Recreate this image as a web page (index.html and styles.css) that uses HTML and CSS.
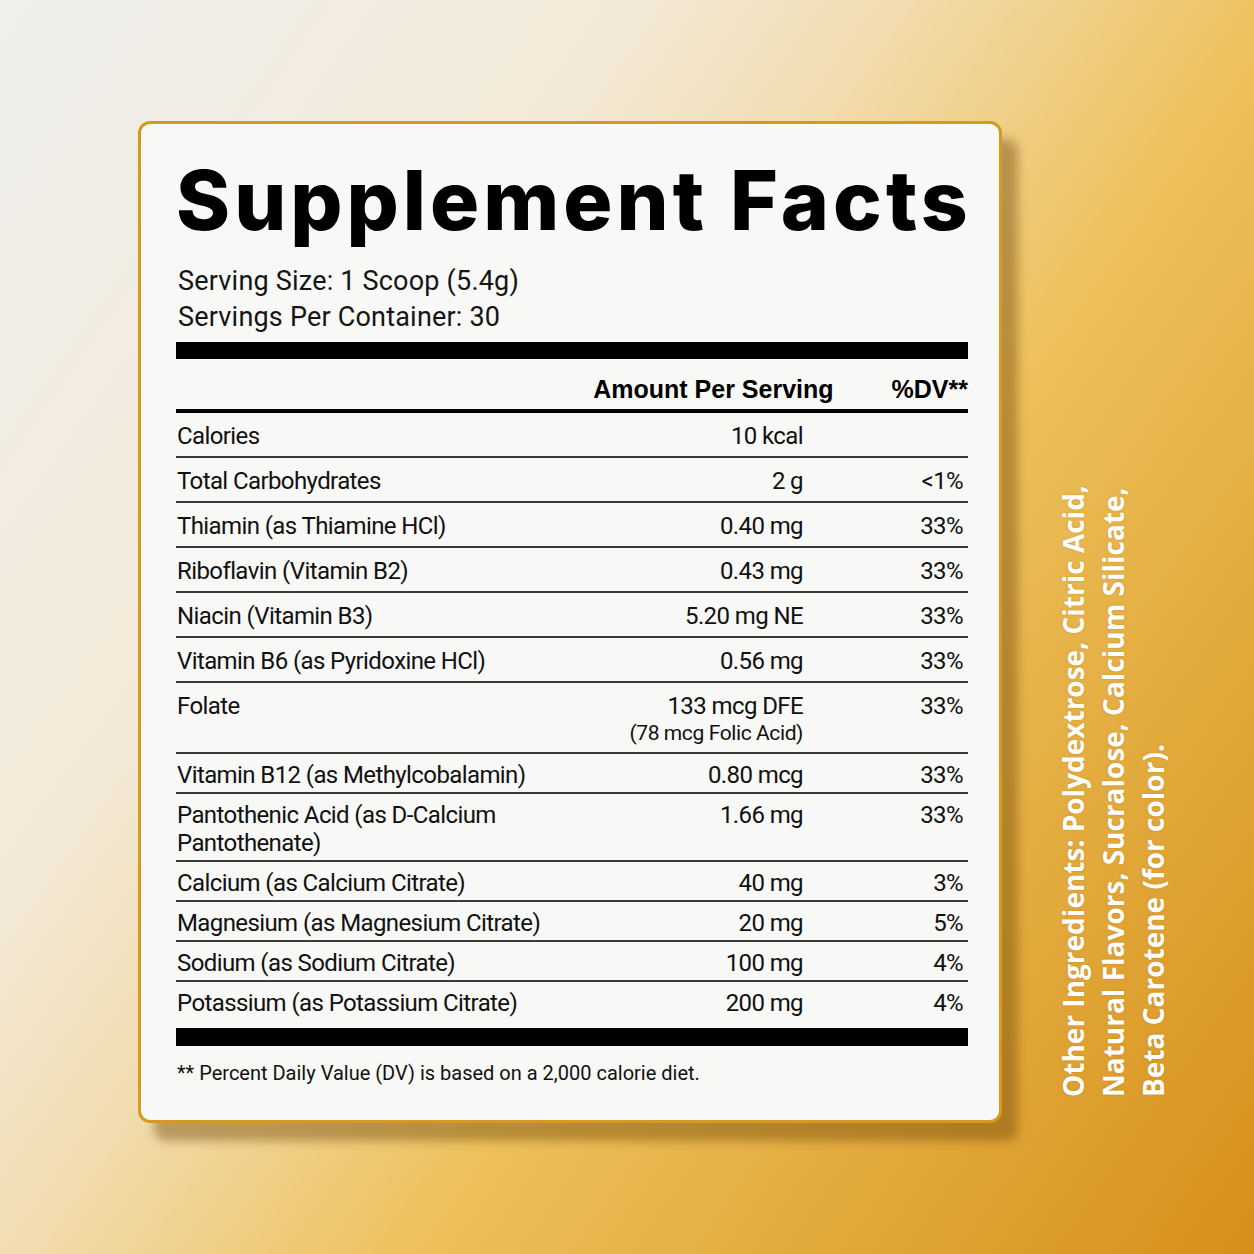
FILE: index.html
```html
<!DOCTYPE html>
<html lang="en">
<head>
<meta charset="utf-8">
<title>Supplement Facts</title>
<link rel="stylesheet" href="styles.css">
</head>
<body>
<main class="stage">
  <section class="card">
    <h1 class="title">Supplement Facts</h1>
    <div class="serving">
      <div>Serving Size: 1 Scoop (5.4g)</div>
      <div>Servings Per Container: 30</div>
    </div>
    <div class="bar"></div>
    <div class="head">
      <span>Amount Per Serving</span>
      <span>%DV**</span>
    </div>
    <div class="row">
      <span class="name">Calories</span><span class="amt">10 kcal</span><span class="dv"></span>
    </div>
    <div class="row">
      <span class="name">Total Carbohydrates</span><span class="amt">2 g</span><span class="dv">&lt;1%</span>
    </div>
    <div class="row">
      <span class="name">Thiamin (as Thiamine HCl)</span><span class="amt">0.40 mg</span><span class="dv">33%</span>
    </div>
    <div class="row">
      <span class="name">Riboflavin (Vitamin B2)</span><span class="amt">0.43 mg</span><span class="dv">33%</span>
    </div>
    <div class="row">
      <span class="name">Niacin (Vitamin B3)</span><span class="amt">5.20 mg NE</span><span class="dv">33%</span>
    </div>
    <div class="row">
      <span class="name">Vitamin B6 (as Pyridoxine HCl)</span><span class="amt">0.56 mg</span><span class="dv">33%</span>
    </div>
    <div class="row tall">
      <span class="name">Folate</span><span class="amt">133 mcg DFE<span class="sub">(78 mcg Folic Acid)</span></span><span class="dv">33%</span>
    </div>
    <div class="row compact">
      <span class="name">Vitamin B12 (as Methylcobalamin)</span><span class="amt">0.80 mcg</span><span class="dv">33%</span>
    </div>
    <div class="row compact">
      <span class="name">Pantothenic Acid (as D-Calcium Pantothenate)</span><span class="amt">1.66 mg</span><span class="dv">33%</span>
    </div>
    <div class="row compact">
      <span class="name">Calcium (as Calcium Citrate)</span><span class="amt">40 mg</span><span class="dv">3%</span>
    </div>
    <div class="row compact">
      <span class="name">Magnesium (as Magnesium Citrate)</span><span class="amt">20 mg</span><span class="dv">5%</span>
    </div>
    <div class="row compact">
      <span class="name">Sodium (as Sodium Citrate)</span><span class="amt">100 mg</span><span class="dv">4%</span>
    </div>
    <div class="row compact last">
      <span class="name">Potassium (as Potassium Citrate)</span><span class="amt">200 mg</span><span class="dv">4%</span>
    </div>
    <div class="bar bottom"></div>
    <p class="note">** Percent Daily Value (DV) is based on a 2,000 calorie diet.</p>
  </section>
  <aside class="side">
    Other Ingredients: Polydextrose, Citric Acid,<br>
    Natural Flavors, Sucralose, Calcium Silicate,<br>
    Beta Carotene (for color).
  </aside>
</main>
</body>
</html>
```
FILE: styles.css
```css
html, body {
  margin: 0;
  padding: 0;
}
body {
  width: 1254px;
  height: 1254px;
  overflow: hidden;
  background: linear-gradient(125deg, #efefed 0%, #f3e9d7 30%, #f2dcb0 42%, #edc15c 60%, #d68f18 100%);
  font-family: Roboto, "Liberation Sans", Arial, sans-serif;
  color: #111;
}
.stage {
  display: flex;
  align-items: stretch;
  padding: 121px 0 0 138px;
}
.card {
  box-sizing: border-box;
  width: 864px;
  height: 1002px;
  flex: none;
  background: #f8f8f6;
  border: 3px solid #d69a22;
  border-radius: 12px;
  box-shadow: 16px 18px 10px rgba(110, 70, 10, 0.42);
  padding: 36px 31px 0 35px;
}
.title {
  margin: 0;
  font-family: Inter, "Liberation Sans", Arial, sans-serif;
  font-weight: 800;
  font-size: 82px;
  line-height: 82px;
  letter-spacing: 4px;
  color: #000;
  white-space: nowrap;
}
.serving {
  margin-top: 21px;
  font-size: 27px;
  line-height: 36px;
  letter-spacing: 0.2px;
  padding-left: 2px;
  color: #151515;
}
.bar {
  height: 17px;
  background: #000;
  margin-top: 7px;
}
.head {
  display: flex;
  justify-content: flex-end;
  gap: 58px;
  margin-top: 15px;
  padding-bottom: 5px;
  border-bottom: 4px solid #000;
  font-family: "Liberation Sans", Arial, sans-serif;
  font-weight: 700;
  font-size: 25px;
  line-height: 30px;
  color: #000;
}
.row {
  display: grid;
  grid-template-columns: 1fr 200px 160px;
  padding: 8px 5px 5px 1px;
  border-bottom: 2px solid #3a3a3a;
  font-size: 24px;
  line-height: 30px;
  letter-spacing: -0.6px;
}
.row.tall {
  padding-bottom: 7px;
}
.row.compact {
  padding-top: 7px;
  padding-bottom: 3px;
  line-height: 28px;
}
.row.last {
  border-bottom: none;
  padding-bottom: 5px;
}
.amt, .dv {
  text-align: right;
}
.sub {
  display: block;
  font-size: 21px;
  line-height: 24px;
  letter-spacing: -0.4px;
}
.bar.bottom {
  height: 18px;
  margin-top: 6px;
}
.note {
  margin: 15px 0 0 1px;
  font-size: 20px;
  line-height: 24px;
  color: #111;
}
.side {
  box-sizing: border-box;
  align-self: flex-end;
  margin: 0 0 26px 51px;
  height: 660px;
  writing-mode: vertical-rl;
  transform: rotate(180deg);
  white-space: nowrap;
  font-family: "Open Sans", Lato, sans-serif;
  font-weight: 700;
  font-size: 28px;
  line-height: 40px;
  color: #fff;
  text-shadow: 0 0 2px rgba(150, 90, 10, 0.35);
}
```
